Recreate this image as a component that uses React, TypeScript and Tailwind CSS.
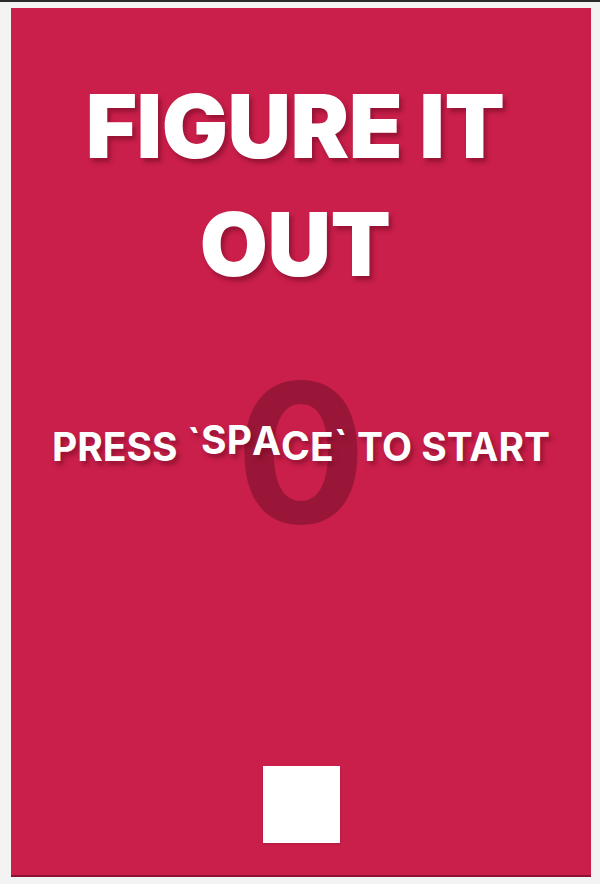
import React from "react";

export default function App() {
  const shadow = { textShadow: "3px 4px 4px rgba(110,10,35,0.55)" };
  return (
    <div
      className="w-[600px] h-[884px] bg-[#f3f3f3] border-t-2 border-[#2a2a2a] pl-[11px] pr-[9px] pt-[6px]"
      style={{ fontFamily: "Inter, 'Noto Sans', sans-serif" }}
    >
      <div className="relative h-[869px] bg-[#c91f4a] border-b-2 border-[#8a1230] flex flex-col items-center overflow-hidden">
        <h1
          className="mt-[59px] w-full text-center text-white font-black text-[88px] leading-[118px] tracking-[-0.5px] pl-[40px] pr-[52px]"
          style={shadow}
        >
          FIGURE IT OUT
        </h1>
        <div className="relative mt-[121px] w-full flex justify-center">
          <div className="absolute left-0 right-0 top-[-68px] flex justify-center text-[194px] leading-none font-bold text-[#921535] opacity-85 select-none">
            0
          </div>
          <div
            className="relative flex items-end text-white font-bold text-[39px] leading-[46px]"
            style={shadow}
          >
            <span>PRESS&nbsp;</span>
            <span className="-translate-y-[4px]">`</span>
            <span className="-translate-y-[7px]">S</span>
            <span className="-translate-y-[7px]">P</span>
            <span className="-translate-y-[6px]">A</span>
            <span className="-translate-y-[1px]">C</span>
            <span>E</span>
            <span className="-translate-y-[2px]">`</span>
            <span>&nbsp;TO START</span>
          </div>
        </div>
        <div className="flex-1" />
        <div className="w-[77px] h-[77px] bg-white mb-[32px] shadow-[0_1px_2px_rgba(0,0,0,0.15)]" />
      </div>
    </div>
  );
}
